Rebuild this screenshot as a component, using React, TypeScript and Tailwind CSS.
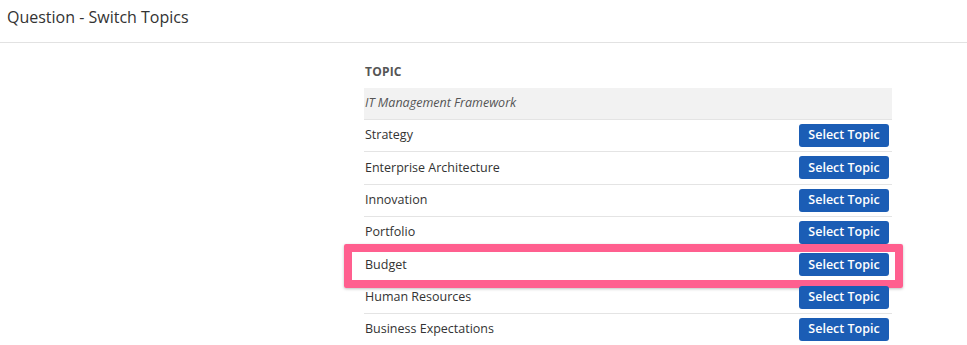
import React from "react";

const rows = [
  "Strategy",
  "Enterprise Architecture",
  "Innovation",
  "Portfolio",
  "Budget",
  "Human Resources",
  "Business Expectations",
];

export default function App() {
  return (
    <div className="w-[967px] h-[345px] overflow-hidden bg-white text-[#333] font-['Open_Sans',sans-serif]">
      <div className="h-[43px] border-b border-[#e2e2e2] flex items-center pl-[7px] pb-[8px]">
        <h1 className="text-[16px] text-[#333]">Question - Switch Topics</h1>
      </div>
      <div className="ml-[364px] w-[528px] mt-[13px]">
        <div className="h-[32px] flex items-center pl-[1px]">
          <span className="text-[12px] font-bold text-[#555] tracking-[0.2px]">TOPIC</span>
        </div>
        <div className="h-[32px] flex items-center bg-[#f2f2f2] pl-[1px] border-b border-[#e4e4e4]">
          <span className="text-[12.5px] italic text-[#555]">IT Management Framework</span>
        </div>
        {rows.map((r) => (
          <div
            key={r}
            className="relative h-[32.34px] flex items-center justify-between pl-[1px] pr-[3px] border-b border-[#e4e4e4]"
          >
            <span className="text-[12.5px] text-[#333]">{r}</span>
            <button className="h-[23px] w-[90px] rounded-[3px] bg-[#1b5db5] text-white text-[12.5px] font-semibold leading-none flex items-center justify-center">
              Select Topic
            </button>
            {r === "Budget" && (
              <div className="absolute left-[-20px] right-[-11px] top-[-5px] bottom-[-7px] border-[8px] border-[#ff5f8f] rounded-[2px] shadow-[0_1px_3px_rgba(0,0,0,0.25)] pointer-events-none" />
            )}
          </div>
        ))}
      </div>
    </div>
  );
}
